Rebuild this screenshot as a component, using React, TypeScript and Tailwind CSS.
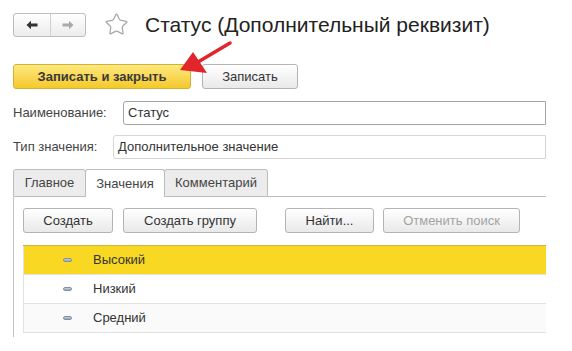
import { Star } from "lucide-react";

const btn =
  "h-[25px] flex items-center justify-center rounded-[3px] border border-[#b4b4b4] bg-gradient-to-b from-white to-[#e9e9e9] text-[13px] text-[#333]";

const ROWS = [
  { name: "Высокий", bg: "bg-[#f8d823]" },
  { name: "Низкий", bg: "bg-white" },
  { name: "Средний", bg: "bg-[#fafafa]" },
];

function Dash() {
  return (
    <div className="w-[9px] h-[4px] rounded-full border border-[#8290a6] bg-gradient-to-b from-[#c9d2de] to-[#95a3b7]" />
  );
}

export default function App() {
  return (
    <div
      className="relative w-[572px] h-[351px] overflow-hidden bg-white text-[#333]"
      style={{ fontFamily: '"Liberation Sans", Arial, sans-serif' }}
    >
      {/* header */}
      <div className="flex items-center pl-[13px] pt-[12px]">
        <div className="flex h-[24px] w-[73px] rounded-[3px] border border-[#bdbdbd] bg-gradient-to-b from-white to-[#ececec]">
          <div className="flex w-[37px] items-center justify-center border-r border-[#d0d0d0]">
            <svg width="12" height="10" viewBox="0 0 12 10">
              <path d="M0.5 5 L5 0.8 L5 3.6 L11.5 3.6 L11.5 6.4 L5 6.4 L5 9.2 Z" fill="#333" />
            </svg>
          </div>
          <div className="flex flex-1 items-center justify-center">
            <svg width="12" height="10" viewBox="0 0 12 10">
              <path d="M11.5 5 L7 0.8 L7 3.6 L0.5 3.6 L0.5 6.4 L7 6.4 L7 9.2 Z" fill="#aaa" />
            </svg>
          </div>
        </div>
        <Star className="ml-[18px] h-[25px] w-[25px] text-[#a8a8a8]" strokeWidth={1.2} />
        <div className="ml-[16px] text-[21px] leading-[24px] text-[#222]">
          Статус (Дополнительный реквизит)
        </div>
      </div>

      {/* command bar */}
      <div className="mt-[27px] flex gap-[11px] pl-[13px]">
        <div className="flex h-[25px] w-[178px] items-center justify-center rounded-[3px] border border-[#d2b13a] bg-gradient-to-b from-[#fde97a] to-[#f5c824] text-[13px] font-bold text-[#3a3a3a]">
          Записать и закрыть
        </div>
        <div className={`${btn} w-[96px]`}>Записать</div>
      </div>

      {/* fields */}
      <div className="mt-[12px] flex items-center pl-[13px]">
        <div className="w-[110px] text-[13px] text-[#444]">Наименование:</div>
        <div className="flex h-[24px] w-[423px] items-center rounded-l-[3px] border border-[#a4a4a4] pl-[4px] text-[13px]">
          Статус
        </div>
      </div>
      <div className="mt-[10px] flex items-center pl-[13px]">
        <div className="w-[100px] text-[13px] text-[#444]">Тип значения:</div>
        <div className="flex h-[24px] w-[433px] items-center rounded-l-[3px] border border-[#d6d6d6] pl-[4px] text-[13px]">
          Дополнительное значение
        </div>
      </div>

      {/* tabs */}
      <div className="ml-[13px] mt-[10px] w-[533px]">
        <div className="flex h-[28px]">
          <div className="flex w-[73px] items-center justify-center rounded-t-[3px] border border-[#bcbcbc] bg-[#ececec] text-[13px] text-[#444]">
            Главное
          </div>
          <div className="-ml-px flex w-[80px] items-center justify-center rounded-t-[3px] border border-b-0 border-[#bcbcbc] bg-white text-[13px] text-[#444]">
            Значения
          </div>
          <div className="-ml-px flex w-[104px] items-center justify-center rounded-t-[3px] border border-[#bcbcbc] bg-[#ececec] text-[13px] text-[#444]">
            Комментарий
          </div>
          <div className="flex-1 border-b border-[#bcbcbc]" />
        </div>
        <div className="h-[140px] border-l border-[#c4c4c4] pl-[9px] pt-[11px]">
          <div className="flex">
            <div className={`${btn} w-[90px]`}>Создать</div>
            <div className={`${btn} ml-[10px] w-[134px]`}>Создать группу</div>
            <div className={`${btn} ml-[28px] w-[89px]`}>Найти...</div>
            <div className={`${btn} ml-[9px] w-[137px] text-[#a3a3a3]`}>Отменить поиск</div>
          </div>
          <div className="mt-[12px] w-[523px] border-t border-[#c8b640]">
            {ROWS.map((r) => (
              <div
                key={r.name}
                className={`flex h-[29px] items-center border-b border-l border-[#e2e2e2] ${r.bg}`}
              >
                <div className="ml-[39px] w-[30px]">
                  <Dash />
                </div>
                <div className="text-[13px] text-[#333]">{r.name}</div>
              </div>
            ))}
          </div>
        </div>
      </div>

      {/* red arrow */}
      <svg className="absolute left-0 top-0" width="572" height="351" viewBox="0 0 572 351">
        <line x1="230" y1="43" x2="198" y2="62" stroke="#e0262b" strokeWidth="3.5" strokeLinecap="round" />
        <path d="M180 70 L193 52 L207 73 Z" fill="#e0262b" />
      </svg>
    </div>
  );
}
